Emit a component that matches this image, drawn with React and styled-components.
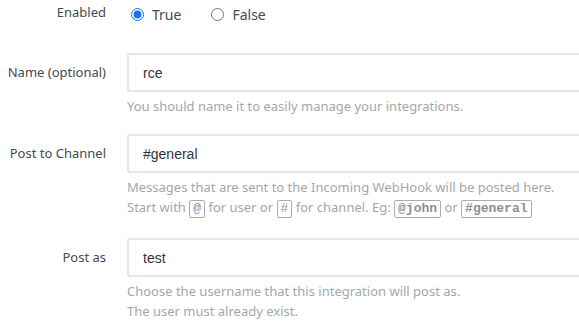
import React from "react";
import styled, { createGlobalStyle } from "styled-components";

const GlobalStyle = createGlobalStyle`
  html, body {
    margin: 0;
    padding: 0;
    background: #ffffff;
    overflow: hidden;
  }
  body {
    font-family: "Noto Sans", "Open Sans", sans-serif;
  }
`;

const Form = styled.div`
  width: 579px;
  height: 323px;
  overflow: hidden;
  display: flex;
  flex-direction: column;
`;

const Row = styled.div`
  display: grid;
  grid-template-columns: 106px 1fr;
  column-gap: 21px;
  margin-top: ${({ $top }) => $top}px;
`;

const Label = styled.div`
  text-align: right;
  font-size: 13px;
  color: #444a50;
  line-height: ${({ $lh }) => $lh}px;
  white-space: nowrap;
`;

const Field = styled.div`
  display: flex;
  flex-direction: column;
  min-width: 0;
`;

const Radios = styled.div`
  display: flex;
  align-items: center;
  gap: 26px;
  height: 28px;
`;

const RadioLabel = styled.label`
  display: flex;
  align-items: center;
  gap: 8px;
  font-size: 14px;
  color: #444a50;
`;

const Radio = styled.input`
  margin: 0 0 0 4px;
  width: 13px;
  height: 13px;
  accent-color: #1a73e8;
`;

const Input = styled.input`
  box-sizing: border-box;
  width: 480px;
  height: 39px;
  border: 2px solid #e2e5e9;
  border-radius: 2px;
  padding: 0 14px;
  font-family: "Liberation Sans", Arial, sans-serif;
  font-size: 14px;
  color: #333;
  outline: none;
`;

const Help = styled.div`
  margin-top: 4px;
  font-size: 13px;
  line-height: 20px;
  color: #a3a7ab;
  white-space: nowrap;
`;

const Code = styled.code`
  display: inline-block;
  border: 1px solid #a9adb1;
  border-radius: 2px;
  padding: 0 3px;
  line-height: 16px;
  font-family: "Liberation Mono", "DejaVu Sans Mono", monospace;
  font-size: 13px;
  font-weight: ${({ $bold }) => ($bold ? 700 : 400)};
  color: #8d9195;
`;

export default function App() {
  return (
    <>
      <GlobalStyle />
      <Form>
        <Row $top={0}>
          <Label $lh={25}>Enabled</Label>
          <Radios>
            <RadioLabel>
              <Radio type="radio" name="enabled" defaultChecked />
              True
            </RadioLabel>
            <RadioLabel>
              <Radio type="radio" name="enabled" />
              False
            </RadioLabel>
          </Radios>
        </Row>

        <Row $top={25}>
          <Label $lh={39}>Name (optional)</Label>
          <Field>
            <Input defaultValue="rce" />
            <Help>You should name it to easily manage your integrations.</Help>
          </Field>
        </Row>

        <Row $top={18}>
          <Label $lh={39}>Post to Channel</Label>
          <Field>
            <Input defaultValue="#general" />
            <Help>
              Messages that are sent to the Incoming WebHook will be posted here.
              <br />
              Start with <Code>@</Code> for user or <Code>#</Code> for channel.
              Eg: <Code $bold>@john</Code> or <Code $bold>#general</Code>
            </Help>
          </Field>
        </Row>

        <Row $top={20}>
          <Label $lh={39}>Post as</Label>
          <Field>
            <Input defaultValue="test" />
            <Help>
              Choose the username that this integration will post as.
              <br />
              The user must already exist.
            </Help>
          </Field>
        </Row>
      </Form>
    </>
  );
}
